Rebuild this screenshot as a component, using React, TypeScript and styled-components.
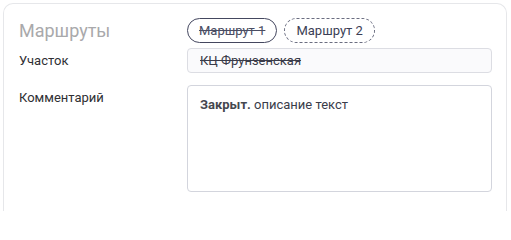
import React from 'react';
import styled, { createGlobalStyle } from 'styled-components';

const GlobalStyle = createGlobalStyle`
  * { box-sizing: border-box; }
  body {
    margin: 0;
    background: #ffffff;
    font-family: Roboto, "Liberation Sans", sans-serif;
  }
`;

const Page = styled.div`
  padding: 3px 4px 0 3px;
`;

const Card = styled.section`
  background: #fff;
  border: 1px solid #e6e7ea;
  border-bottom: none;
  border-radius: 10px 10px 0 0;
  padding: 14px 14px 19px 15px;
  display: grid;
  grid-template-columns: 168px 1fr;
  row-gap: 5px;
`;

const Title = styled.h2`
  margin: 0;
  font-size: 18px;
  font-weight: 400;
  color: #a9a9ab;
  line-height: 25px;
  align-self: center;
`;

const Label = styled.div<{ $gap?: number }>`
  font-size: 13px;
  color: #2f2f33;
  line-height: 25px;
  margin-top: ${p => p.$gap ?? 0}px;
`;

const Chips = styled.div`
  display: flex;
  gap: 7px;
`;

const Chip = styled.span<{ $dashed?: boolean; $closed?: boolean }>`
  height: 25px;
  display: inline-flex;
  align-items: center;
  padding: 0 11px;
  border-radius: 13px;
  border: ${p => (p.$dashed ? '1px dashed #6a6d80' : '1.3px solid #44475f')};
  font-size: 13px;
  color: ${p => (p.$closed ? '#4a4d63' : '#3b3e55')};
  text-decoration: ${p => (p.$closed ? 'line-through' : 'none')};
`;

const Field = styled.div`
  height: 25px;
  border: 1px solid #dcdde3;
  border-radius: 4px;
  background: #fafafc;
  padding: 0 12px;
  display: flex;
  align-items: center;
  font-size: 13px;
  color: #3a3c4a;
  text-decoration: line-through;
`;

const TextArea = styled.div<{ $gap?: number }>`
  height: 107px;
  margin-top: ${p => p.$gap ?? 0}px;
  border: 1px solid #d3d5dd;
  border-radius: 4px;
  background: #fff;
  padding: 11px 12px;
  font-size: 13px;
  line-height: 15px;
  color: #3a3c4a;

  b {
    font-weight: 700;
    color: #45474f;
  }
`;

export default function App() {
  return (
    <>
      <GlobalStyle />
      <Page>
        <Card>
          <Title>Маршруты</Title>
          <Chips>
            <Chip $closed>Маршрут 1</Chip>
            <Chip $dashed>Маршрут 2</Chip>
          </Chips>
          <Label>Участок</Label>
          <Field>КЦ Фрунзенская</Field>
          <Label $gap={7}>Комментарий</Label>
          <TextArea $gap={7}>
            <b>Закрыт.</b> описание текст
          </TextArea>
        </Card>
      </Page>
    </>
  );
}
